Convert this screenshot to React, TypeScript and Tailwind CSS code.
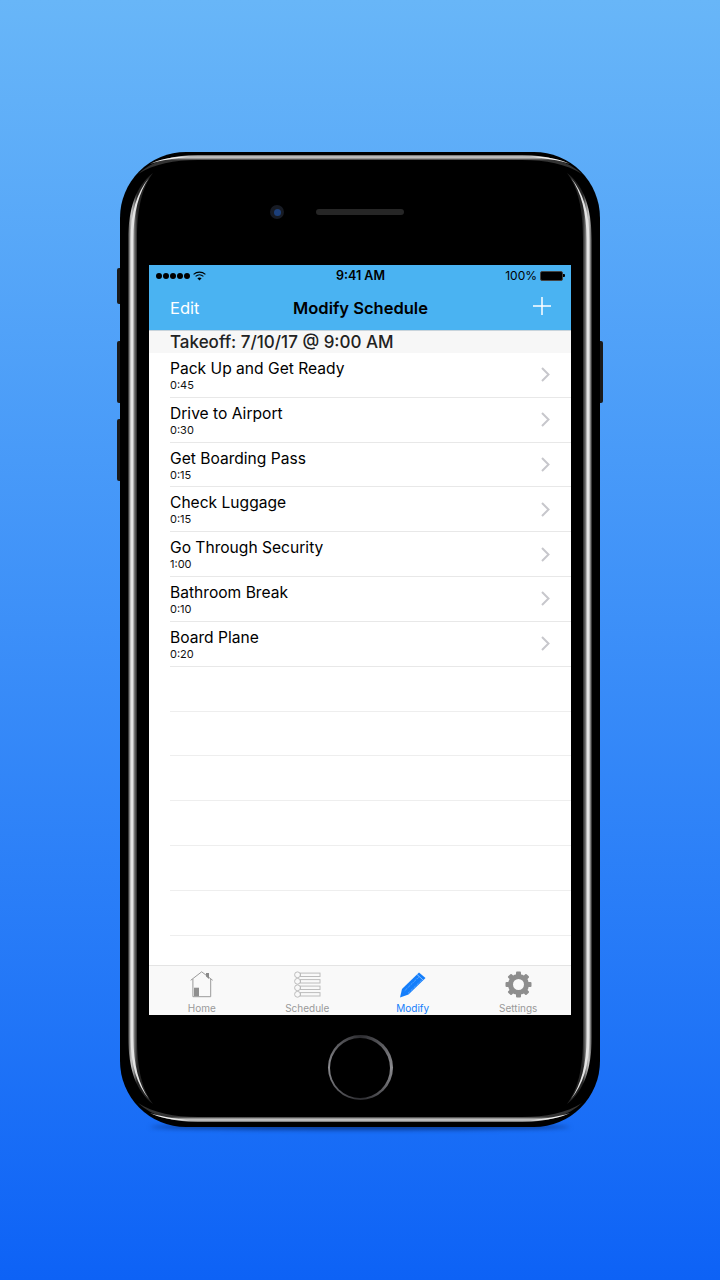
import type { ReactNode } from 'react';

const steps = [
  { name: 'Pack Up and Get Ready', time: '0:45' },
  { name: 'Drive to Airport', time: '0:30' },
  { name: 'Get Boarding Pass', time: '0:15' },
  { name: 'Check Luggage', time: '0:15' },
  { name: 'Go Through Security', time: '1:00' },
  { name: 'Bathroom Break', time: '0:10' },
  { name: 'Board Plane', time: '0:20' },
];

const emptyRows = [0, 1, 2, 3, 4, 5];

function BezelSide() {
  return (
    <>
      <path
        d="M128.3 240C128.3 208 136 186 153 173C142 188 137 208 137 240V1037C137 1069 142 1089 153 1104C136 1091 128.3 1069 128.3 1037Z"
        fill="url(#sideBand)"
      />
      <path
        d="M130.6 240C130.6 212 137 192 149 178C139 192 133.4 212 133.4 240V1037C133.4 1065 139 1085 149 1099C137 1085 130.6 1065 130.6 1037Z"
        fill="#e4e4e4"
      />
    </>
  );
}

function BezelTop() {
  return (
    <>
      <path
        d="M138 174C152 161 172 155 198 155H360V160H198C174 160 154 164 138 174Z"
        fill="url(#topBand)"
      />
      <path d="M150 164C160 159 172 157 190 156.6C174 158.6 162 160 150 164Z" fill="#f2f2f2" />
    </>
  );
}

// the metal rim is only lit on parts of the curve, so it is drawn over the black body
function PhoneRim() {
  return (
    <svg className="pointer-events-none absolute inset-0 blur-[0.3px]" width="480" height="975" viewBox="120 152 480 975">
      <defs>
        <linearGradient id="sideBand" gradientUnits="userSpaceOnUse" x1="128" y1="0" x2="137" y2="0">
          <stop offset="0" stopColor="#3a3a3a" />
          <stop offset="0.35" stopColor="#c8c8c8" />
          <stop offset="0.65" stopColor="#8a8a8a" />
          <stop offset="1" stopColor="#262626" />
        </linearGradient>
        <linearGradient id="topBand" gradientUnits="userSpaceOnUse" x1="0" y1="155" x2="0" y2="160">
          <stop offset="0" stopColor="#666" />
          <stop offset="0.4" stopColor="#d2d2d2" />
          <stop offset="0.75" stopColor="#8c8c8c" />
          <stop offset="1" stopColor="#333" />
        </linearGradient>
      </defs>
      <BezelSide />
      <g transform="translate(720 0) scale(-1 1)">
        <BezelSide />
      </g>
      <BezelTop />
      <g transform="translate(720 0) scale(-1 1)">
        <BezelTop />
      </g>
      <g transform="translate(0 1277) scale(1 -1)">
        <BezelTop />
      </g>
      <g transform="translate(720 1277) scale(-1 -1)">
        <BezelTop />
      </g>
    </svg>
  );
}

function WifiIcon() {
  return (
    <svg width="13" height="10" viewBox="0 0 13 10" fill="none" stroke="#000" strokeWidth="1.1">
      <path d="M0.6 3.4C4 0.3 9 0.3 12.4 3.4" />
      <path d="M2.6 5.4C4.9 3.4 8.1 3.4 10.4 5.4" />
      <path d="M6.5 9.6L4.4 7.2C5.6 6.2 7.4 6.2 8.6 7.2Z" fill="#000" stroke="none" />
    </svg>
  );
}

function ChevronIcon() {
  return (
    <svg width="9" height="15" viewBox="0 0 9 15" fill="none" stroke="#c7c7cc" strokeWidth="2">
      <path d="M1 1L7.5 7.5L1 14" />
    </svg>
  );
}

function PlusIcon() {
  return (
    <svg width="18" height="18" viewBox="0 0 18 18" stroke="#fff" strokeWidth="1.5">
      <path d="M9 0V18M0 9H18" />
    </svg>
  );
}

function HomeIcon() {
  return (
    <svg width="24" height="27" viewBox="0 0 24 27" fill="none" stroke="#9a9a9a" strokeWidth="1">
      <path d="M0.7 9.3L11.7 0.8L22.7 9.3" />
      <path d="M2.9 8V25.7H20.7V8" />
      <path d="M16 2H19V8L16 5.5Z" fill="#8a8a8a" stroke="none" />
      <rect x="4" y="16.7" width="5" height="8.5" fill="#8f8f8f" stroke="none" />
    </svg>
  );
}

function ScheduleIcon() {
  return (
    <svg width="27" height="27" viewBox="0 0 27 27" fill="none" stroke="#bcbcbc" strokeWidth="1">
      {[3.8, 10.3, 16.8, 23.3].map((y) => (
        <g key={y}>
          <circle cx="3.5" cy={y} r="2.9" />
          <rect x="6.5" y={y - 1.7} width="19.5" height="3.4" />
        </g>
      ))}
    </svg>
  );
}

function PencilIcon() {
  return (
    <svg width="26" height="26" viewBox="0 0 26 26">
      <path d="M0 25.5L2 17L19 0.5L25.5 6L8.5 22.5Z" fill="#147efb" />
      <path d="M4.8 18.6L19 4.8M8 21.4L22 7.8" stroke="#9ccafd" strokeWidth="0.7" strokeDasharray="1.1 1" fill="none" />
      <path d="M17 2.5L23.3 8.2" stroke="#cfe5ff" strokeWidth="0.6" fill="none" />
    </svg>
  );
}

function GearIcon() {
  const teeth = [0, 45, 90, 135, 180, 225, 270, 315];
  return (
    <svg width="27" height="27" viewBox="0 0 27 27">
      {teeth.map((a) => (
        <rect key={a} x="11" y="0.5" width="5" height="6" rx="1" fill="#8e8e8e" transform={`rotate(${a} 13.5 13.5)`} />
      ))}
      <circle cx="13.5" cy="13.5" r="8" fill="none" stroke="#8e8e8e" strokeWidth="5" />
    </svg>
  );
}

function TabItem({ label, active, children }: { label: string; active?: boolean; children: ReactNode }) {
  return (
    <div className="flex w-[105.5px] flex-col items-center">
      <div className="flex h-[27px] items-center justify-center">{children}</div>
      <span className={`mt-[4px] text-[10px] leading-[12px] ${active ? 'text-[#147efb]' : 'text-[#999999]'}`}>{label}</span>
    </div>
  );
}

export default function App() {
  return (
    <div className="h-[1280px] w-[720px] overflow-hidden bg-gradient-to-b from-[#68b6f8] to-[#0d62f6] pt-[152px] font-['Inter','Liberation_Sans',sans-serif]">
      <div className="relative mx-auto h-[975px] w-[480px]">
        {/* side buttons */}
        <div className="absolute left-[-3px] top-[116px] h-[36px] w-[4px] rounded-l-[2px] bg-[#1a1a1a]" />
        <div className="absolute left-[-3px] top-[189px] h-[62px] w-[4px] rounded-l-[2px] bg-[#1a1a1a]" />
        <div className="absolute left-[-3px] top-[267px] h-[62px] w-[4px] rounded-l-[2px] bg-[#1a1a1a]" />
        <div className="absolute right-[-3px] top-[189px] h-[62px] w-[4px] rounded-r-[2px] bg-[#1a1a1a]" />
        <div className="absolute bottom-[-3px] left-[30px] right-[30px] h-[6px] rounded-[50%] bg-[#0a3c96] blur-[2px]" />

        <div className="relative flex h-full flex-col items-center rounded-[66px] bg-black">
          {/* camera and earpiece */}
          <div className="flex h-[113px] w-full items-start justify-center pr-[46px] pt-[53px]">
            <div className="flex h-[14px] w-[14px] items-center justify-center rounded-full bg-[#171b24]">
              <div className="h-[7px] w-[7px] rounded-full bg-[#1c3f7a]" />
            </div>
            <div className="ml-[32px] mt-[4px] h-[6px] w-[88px] rounded-full bg-[#262626]" />
          </div>

          {/* screen */}
          <div className="flex h-[750px] w-[422px] flex-col bg-white">
            <div className="h-[65px] bg-[#4ab3f2]">
              <div className="flex h-[20px] items-center justify-between pl-[7px] pr-[6px] pt-[1px]">
                <div className="flex w-[150px] items-center gap-[1px]">
                  {[0, 1, 2, 3, 4].map((d) => (
                    <div key={d} className="h-[6px] w-[6px] rounded-full bg-black" />
                  ))}
                  <div className="ml-[2px]">
                    <WifiIcon />
                  </div>
                </div>
                <span className="mt-[2px] text-[12.5px] font-semibold leading-none text-black">9:41 AM</span>
                <div className="flex w-[150px] items-center justify-end gap-[3px]">
                  <span className="text-[12px] leading-none text-black">100%</span>
                  <div className="h-[10px] w-[23px] rounded-[2px] border border-[#444] bg-black" />
                  <div className="ml-[-3px] h-[3px] w-[2px] rounded-r-[1px] bg-black" />
                </div>
              </div>
              <div className="flex h-[45px] items-center justify-between pl-[21px] pr-[20px] pt-[1px]">
                <span className="w-[70px] text-[16.5px] text-white">Edit</span>
                <span className="text-[16.5px] font-semibold text-black">Modify Schedule</span>
                <div className="mb-[4px] flex w-[70px] justify-end">
                  <PlusIcon />
                </div>
              </div>
            </div>

            <div className="flex h-[23px] items-center border-t border-[#c8d4dc] bg-[#f7f7f7] pl-[21px] pt-[1px] text-[17px] font-medium leading-none text-[#222]">
              Takeoff: 7/10/17 @ 9:00 AM
            </div>

            <div className="flex-1 overflow-hidden pl-[21px]">
              {steps.map((step) => (
                <div key={step.name} className="flex h-[44.82px] items-center justify-between border-b border-[#e8e8e8] pr-[21px]">
                  <div className="flex flex-col pt-[1px]">
                    <span className="text-[15.6px] leading-[20px] text-black">{step.name}</span>
                    <span className="text-[11px] leading-[13px] text-[#111]">{step.time}</span>
                  </div>
                  <ChevronIcon />
                </div>
              ))}
              {emptyRows.map((r) => (
                <div key={r} className="h-[44.82px] border-b border-[#eeeeee]" />
              ))}
            </div>

            <div className="flex h-[50px] items-start border-t border-[#e4e4e4] bg-[#f9f9f9] pt-[5px]">
              <TabItem label="Home">
                <HomeIcon />
              </TabItem>
              <TabItem label="Schedule">
                <ScheduleIcon />
              </TabItem>
              <TabItem label="Modify" active>
                <PencilIcon />
              </TabItem>
              <TabItem label="Settings">
                <GearIcon />
              </TabItem>
            </div>
          </div>

          {/* home button */}
          <div className="mt-[20px] h-[65px] w-[65px] rounded-full bg-[conic-gradient(#2c2c30,#8c8c90,#2c2c30,#8c8c90,#2c2c30)] p-[2.5px]">
            <div className="h-full w-full rounded-full bg-black" />
          </div>
        </div>

        <PhoneRim />
      </div>
    </div>
  );
}
